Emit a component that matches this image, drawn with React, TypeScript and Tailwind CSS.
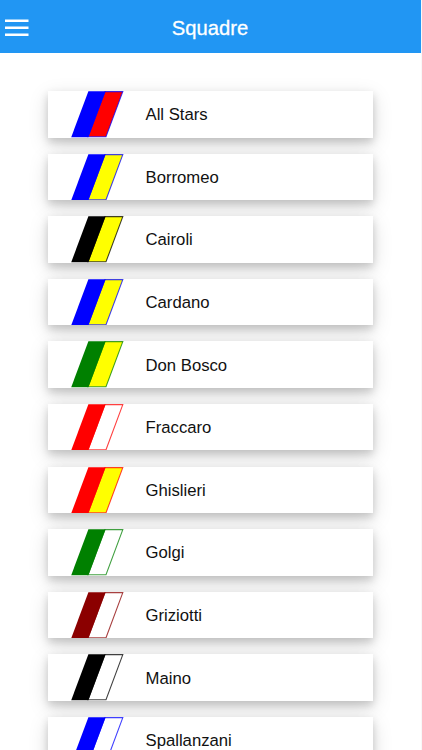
type Team = { name: string; left: string; right: string };

const teams: Team[] = [
  { name: "All Stars", left: "#0000ff", right: "#ff0000" },
  { name: "Borromeo", left: "#0000ff", right: "#ffff00" },
  { name: "Cairoli", left: "#000000", right: "#ffff00" },
  { name: "Cardano", left: "#0000ff", right: "#ffff00" },
  { name: "Don Bosco", left: "#008000", right: "#ffff00" },
  { name: "Fraccaro", left: "#ff0000", right: "#ffffff" },
  { name: "Ghislieri", left: "#ff0000", right: "#ffff00" },
  { name: "Golgi", left: "#008000", right: "#ffffff" },
  { name: "Griziotti", left: "#8b0000", right: "#ffffff" },
  { name: "Maino", left: "#000000", right: "#ffffff" },
  { name: "Spallanzani", left: "#0000ff", right: "#ffffff" },
];

// slanted two-colour flag, outlined in the left colour
function Flag({ left, right }: { left: string; right: string }) {
  return (
    <svg viewBox="0 0 53 46.5" className="ml-[23px] h-[46.5px] w-[53px] shrink-0">
      <path d="M34 0.6H51.8L35 45.8H17Z" fill={right} stroke={left} strokeWidth="1.1" strokeOpacity="0.75" />
      <path d="M17.4 0.2H34.6L17.4 46.3H0.2Z" fill={left} />
    </svg>
  );
}

function TeamCard({ team }: { team: Team }) {
  return (
    <li className="flex h-[46.5px] items-center bg-white shadow-[0_4px_8px_rgba(0,0,0,0.16),0_6px_20px_rgba(0,0,0,0.15)]">
      <Flag left={team.left} right={team.right} />
      <span className="ml-[21.5px] pt-[2px] text-[16.7px] leading-6 text-[#111]">{team.name}</span>
    </li>
  );
}

export default function App() {
  return (
    <div className="h-[750px] overflow-hidden border-r border-[#f8f8f8] bg-white font-['Liberation_Sans',Arial,sans-serif]">
      <header className="grid h-[52.5px] grid-cols-[1fr_auto_1fr] items-center bg-[#2196f3] pr-[1px]">
        <button aria-label="Menu" className="flex w-fit flex-col pl-[4.5px] pt-[3px]">
          <svg viewBox="0 0 24 18" className="h-[18px] w-[24px]" stroke="#fff" strokeWidth="2.4">
            <path d="M0 1.8h23.5M0 8.8h23.5M0 15.8h23.5" />
          </svg>
        </button>
        <h1 className="pt-[3px] text-[20.2px] leading-6 text-white [-webkit-text-stroke:0.3px_white]">Squadre</h1>
      </header>
      <ul className="ml-[48px] mt-[38.5px] flex w-[325px] flex-col gap-[16.1px]">
        {teams.map(t => <TeamCard key={t.name} team={t} />)}
      </ul>
    </div>
  );
}
